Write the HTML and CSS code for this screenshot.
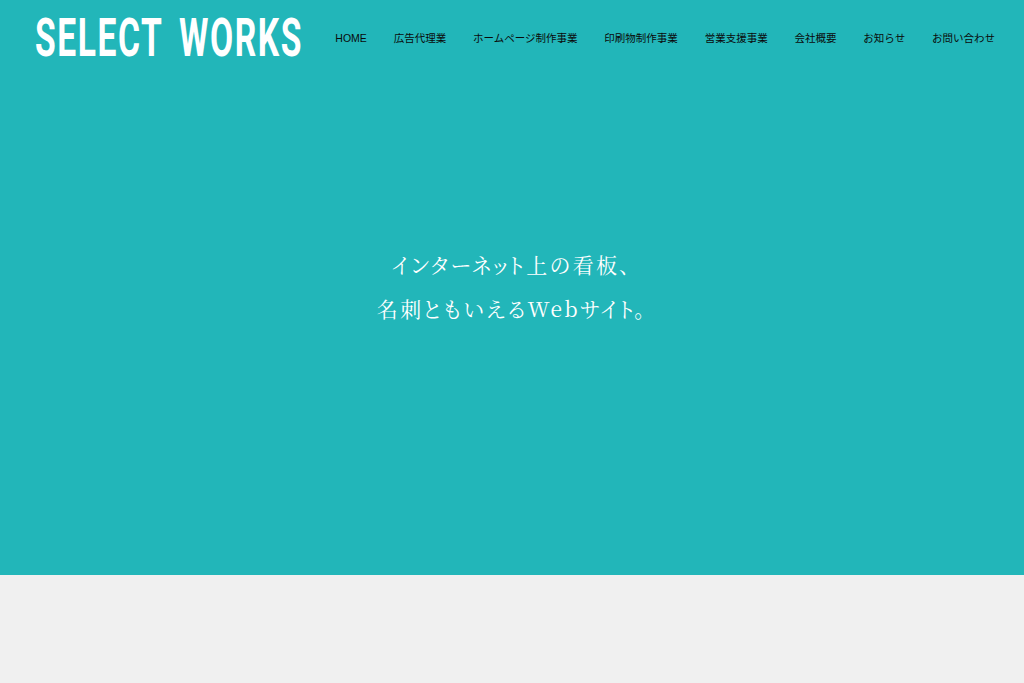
FILE: index.html
```html
<!DOCTYPE html>
<html lang="ja">
<head>
<meta charset="utf-8">
<title>SELECT WORKS</title>
<link rel="stylesheet" href="styles.css">
</head>
<body>
<section class="hero">
  <header class="header">
    <a class="logo"><span class="logo-text">SELECT WORKS</span></a>
    <nav class="nav">
      <a>HOME</a>
      <a>広告代理業</a>
      <a>ホームページ制作事業</a>
      <a>印刷物制作事業</a>
      <a>営業支援事業</a>
      <a>会社概要</a>
      <a>お知らせ</a>
      <a>お問い合わせ</a>
    </nav>
  </header>
  <div class="copy">
    <p>インターネット上の看板、</p>
    <p>名刺ともいえる<span class="latin">Web</span>サイト。</p>
  </div>
</section>
</body>
</html>
```
FILE: styles.css
```css
* { box-sizing: border-box; margin: 0; padding: 0; }
html, body { height: 100%; }
body { background: #f0f0f0; overflow: hidden; font-family: "Liberation Sans", "Noto Sans CJK JP", sans-serif; }
.hero { height: 575px; background: #22b6b9; display: flex; flex-direction: column; }
.header { height: 76px; padding: 0 29px 0 35px; display: flex; align-items: center; justify-content: space-between; }
.logo { width: 266px; height: 50px; display: block; overflow: visible; }
.logo-text { display: block; width: max-content; color: #fff; font-family: Roboto, "Liberation Sans", sans-serif; font-weight: 700; font-size: 53px; line-height: 50px; letter-spacing: 2.5px; word-spacing: 10px; white-space: pre; transform-origin: 0 50%; transform: scaleX(0.634); }
.nav { display: flex; gap: 26.85px; font-size: 10.5px; color: #0a0a0a; line-height: 16px; }
.copy { flex: 1; display: flex; flex-direction: column; align-items: center; justify-content: center; color: #fff; font-family: "Noto Serif CJK JP", "Liberation Serif", serif; font-feature-settings: "palt"; font-size: 21px; font-weight: 400; line-height: 44px; letter-spacing: 2.4px; padding-bottom: 80px; }
.latin { letter-spacing: 2.6px; }
```
